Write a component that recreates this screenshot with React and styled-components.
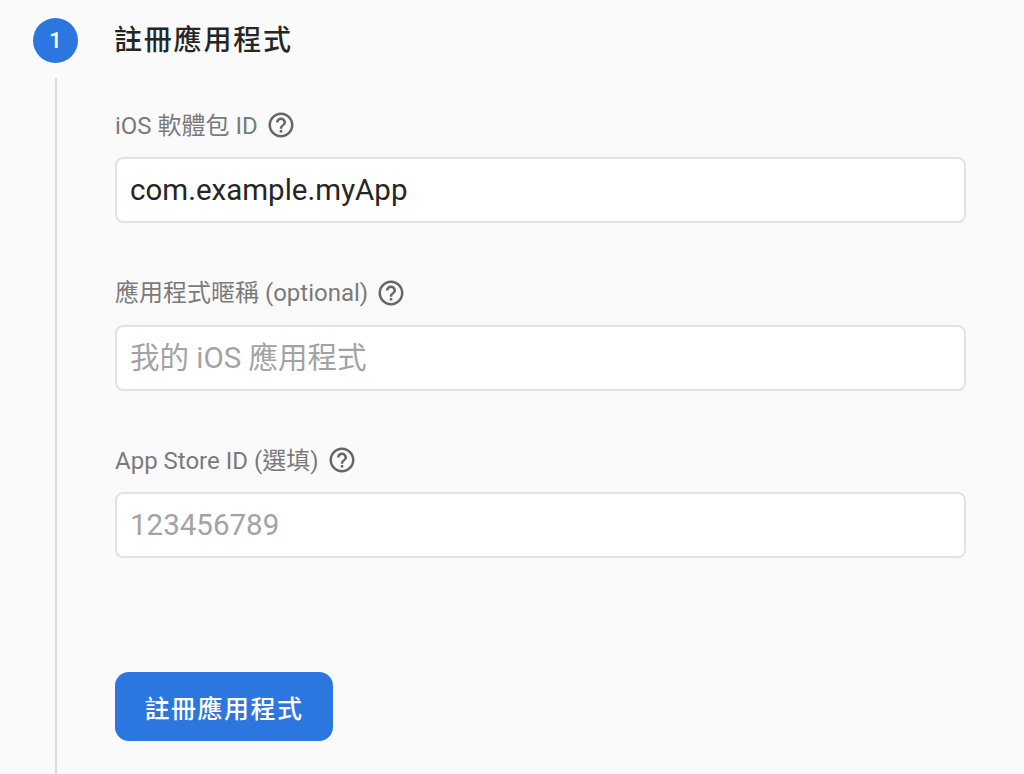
import React from "react"
import styled, { createGlobalStyle } from "styled-components"

const GlobalStyle = createGlobalStyle`
  html, body {
    margin: 0;
    height: 100%;
    overflow: hidden;
    background: #fafafa;
  }
  * {
    box-sizing: border-box;
  }
`

const Page = styled.div`
  width: 1024px;
  height: 774px;
  padding: 18px 58px 0 33px;
  background: #fafafa;
  font-family: Roboto, "Noto Sans CJK TC", sans-serif;
  overflow: hidden;
`

const StepHeader = styled.div`
  display: flex;
  align-items: center;
  gap: 36px;
`

const StepBadge = styled.div`
  width: 45px;
  height: 45px;
  border-radius: 50%;
  background: #2c76e0;
  color: #fff;
  font-size: 22px;
  font-weight: 500;
  display: flex;
  align-items: center;
  justify-content: center;
`

const StepTitle = styled.h2`
  margin: 0;
  font-size: 28px;
  line-height: 45px;
  font-weight: 500;
  letter-spacing: 1.8px;
  color: #262626;
`

const StepBody = styled.div`
  margin: 15px 0 0 22px;
  padding: 25px 0 0 58px;
  border-left: 2px solid #dcdcdc;
  height: 700px;
`

const Field = styled.div`
  margin-bottom: 47.5px;
`

const Label = styled.label`
  display: flex;
  align-items: center;
  gap: 8px;
  height: 40px;
  margin-bottom: 14px;
  font-size: 24px;
  color: #7a7a7a;
`

const HelpIcon = styled.svg`
  width: 30px;
  height: 30px;
  margin-top: 4px;
  fill: #666;
  flex: none;
`

const Input = styled.input`
  display: block;
  width: 100%;
  height: 66px;
  padding: 0 13px;
  background: #fff;
  border: 2px solid #e2e2e2;
  border-radius: 8px;
  outline: none;
  font-family: inherit;
  font-size: 29.5px;
  color: #262626;
  &::placeholder {
    color: #a3a3a3;
    opacity: 1;
  }
`

const SubmitButton = styled.button`
  display: block;
  width: 218px;
  height: 69px;
  margin-top: 114px;
  padding: 0;
  border: 0;
  border-radius: 14px;
  background: #2c76e0;
  color: #fff;
  font-family: inherit;
  font-size: 25px;
  font-weight: 500;
  letter-spacing: 1.5px;
`

function Help() {
  return (
    <HelpIcon viewBox="0 0 24 24">
      <path d="M11 18h2v-2h-2v2zm1-16C6.48 2 2 6.48 2 12s4.48 10 10 10 10-4.48 10-10S17.52 2 12 2zm0 18c-4.41 0-8-3.59-8-8s3.59-8 8-8 8 3.59 8 8-3.59 8-8 8zm0-14c-2.21 0-4 1.79-4 4h2c0-1.1.9-2 2-2s2 .9 2 2c0 2-3 1.75-3 5h2c0-2.25 3-2.5 3-5 0-2.21-1.79-4-4-4z" />
    </HelpIcon>
  )
}

const fields = [
  { label: "iOS 軟體包 ID", value: "com.example.myApp" },
  { label: "應用程式暱稱 (optional)", placeholder: "我的 iOS 應用程式" },
  { label: "App Store ID (選填)", placeholder: "123456789" },
]

export default function App() {
  return (
    <Page>
      <GlobalStyle />
      <StepHeader>
        <StepBadge>1</StepBadge>
        <StepTitle>註冊應用程式</StepTitle>
      </StepHeader>
      <StepBody>
        {fields.map((field) => (
          <Field key={field.label}>
            <Label>
              {field.label}
              <Help />
            </Label>
            <Input
              defaultValue={field.value}
              placeholder={field.placeholder}
            />
          </Field>
        ))}
        <SubmitButton>註冊應用程式</SubmitButton>
      </StepBody>
    </Page>
  )
}
